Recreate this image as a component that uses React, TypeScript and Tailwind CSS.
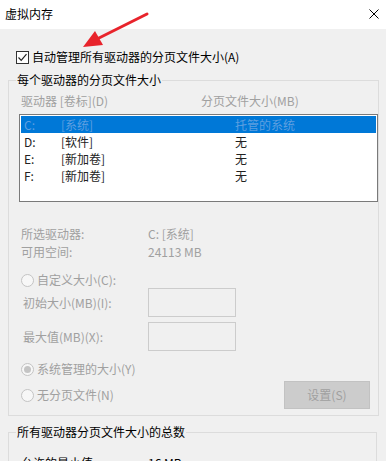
import React from "react";

function Radio({ checked }: { checked?: boolean }) {
  return (
    <span className="w-[13px] h-[13px] rounded-full border border-[#c4c4c4] bg-[#f7f7f7] flex items-center justify-center shrink-0">
      {checked && <span className="w-[7px] h-[7px] rounded-full bg-[#c4c4c4]" />}
    </span>
  );
}

const rows = [
  { d: "C:", l: "[系统]", s: "托管的系统", sel: true },
  { d: "D:", l: "[软件]", s: "无" },
  { d: "E:", l: "[新加卷]", s: "无" },
  { d: "F:", l: "[新加卷]", s: "无" },
];

export default function App() {
  return (
    <div className="relative w-[386px] h-[461px] overflow-hidden bg-[#f0f0f0] text-[12px] leading-[16px] text-black font-['Noto_Sans_CJK_SC','Microsoft_YaHei',sans-serif]">
      {/* title bar */}
      <div className="h-[29px] bg-white flex items-center justify-between pl-[5px] pr-[7px]">
        <span className="leading-none -mt-[2px]">虚拟内存</span>
        <svg width="10" height="10" viewBox="0 0 10 10" className="-mt-[2px]">
          <path d="M0.5 0.5 L9.5 9.5 M9.5 0.5 L0.5 9.5" stroke="#000" strokeWidth="1" fill="none" />
        </svg>
      </div>

      <div className="px-[8px]">
        {/* checkbox row */}
        <div className="mt-[21px] h-[14px] flex items-center pl-[8px] gap-[3px]">
          <span className="w-[13px] h-[13px] border border-[#333] bg-white flex items-center justify-center shrink-0">
            <svg width="11" height="11" viewBox="0 0 11 11">
              <path d="M1.5 5.5 L4.2 8.3 L9.5 2.2" stroke="#222" strokeWidth="1.2" fill="none" />
            </svg>
          </span>
          <span>自动管理所有驱动器的分页文件大小(A)</span>
        </div>

        {/* group 1 */}
        <fieldset className="mt-[8px] w-[369px] border border-[#dcdcdc] pb-[6px]">
          <legend className="ml-[7px] px-[1px] leading-[16px]">每个驱动器的分页文件大小</legend>
          <div className="mt-[5px] h-[16px] flex text-[#a0a0a0]">
            <span className="pl-[12px] w-[192px]">驱动器 [卷标](D)</span>
            <span>分页文件大小(MB)</span>
          </div>
          <div className="mt-[5px] ml-[10px] w-[359px] h-[88px] border border-[#7a7a7a] bg-white p-[1px]">
            {rows.map((r) => (
              <div
                key={r.d}
                className={
                  "h-[17px] flex items-center pl-[3px] " +
                  (r.sel ? "bg-[#0078d7] text-[#5e9fe0]" : "text-[#222]")
                }
              >
                <span className="w-[37px]">{r.d}</span>
                <span className="w-[174px]">{r.l}</span>
                <span>{r.s}</span>
              </div>
            ))}
          </div>

          <div className="text-[#a0a0a0]">
            <div className="mt-[24px] h-[16px] flex pl-[12px]">
              <span className="w-[127px]">所选驱动器:</span>
              <span>C:&nbsp;[系统]</span>
            </div>
            <div className="mt-[2px] h-[16px] flex pl-[12px]">
              <span className="w-[127px]">可用空间:</span>
              <span>24113 MB</span>
            </div>

            <div className="mt-[12px] h-[16px] flex items-center pl-[12px] gap-[3px]">
              <Radio />
              <span>自定义大小(C):</span>
            </div>
            <div className="h-[29px] flex items-center pl-[14px]">
              <span className="w-[125px]">初始大小(MB)(I):</span>
              <span className="w-[88px] h-[29px] border border-[#cccccc] bg-[#f0f0f0]" />
            </div>
            <div className="mt-[5px] h-[29px] flex items-center pl-[14px]">
              <span className="w-[125px]">最大值(MB)(X):</span>
              <span className="w-[88px] h-[29px] border border-[#cccccc] bg-[#f0f0f0]" />
            </div>

            <div className="mt-[10px] h-[16px] flex items-center pl-[12px] gap-[3px]">
              <Radio checked />
              <span>系统管理的大小(Y)</span>
            </div>
            <div className="mt-[4px] h-[28px] flex items-center justify-between pl-[12px] pr-[8px]">
              <div className="flex items-center gap-[3px]">
                <Radio />
                <span>无分页文件(N)</span>
              </div>
              <div className="w-[86px] h-[28px] bg-[#cccccc] border border-[#c2c2c2] flex items-center justify-center text-[#a0a0a0]">
                设置(S)
              </div>
            </div>
          </div>
        </fieldset>

        {/* group 2 */}
        <fieldset className="mt-[8px] w-[369px] border border-[#dcdcdc] h-[60px]">
          <legend className="ml-[7px] px-[1px] leading-[16px]">所有驱动器分页文件大小的总数</legend>
          <div className="mt-[15px] h-[16px] flex pl-[12px]">
            <span className="w-[127px]">允许的最小值:</span>
            <span>16 MB</span>
          </div>
        </fieldset>
      </div>

      {/* red annotation arrow */}
      <svg className="absolute left-0 top-0 pointer-events-none" width="386" height="461">
        <line x1="147" y1="14" x2="97" y2="39" stroke="#e8232b" strokeWidth="3" strokeLinecap="round" />
        <polygon points="83,47 95,31 103,45" fill="#e8232b" />
      </svg>
    </div>
  );
}
